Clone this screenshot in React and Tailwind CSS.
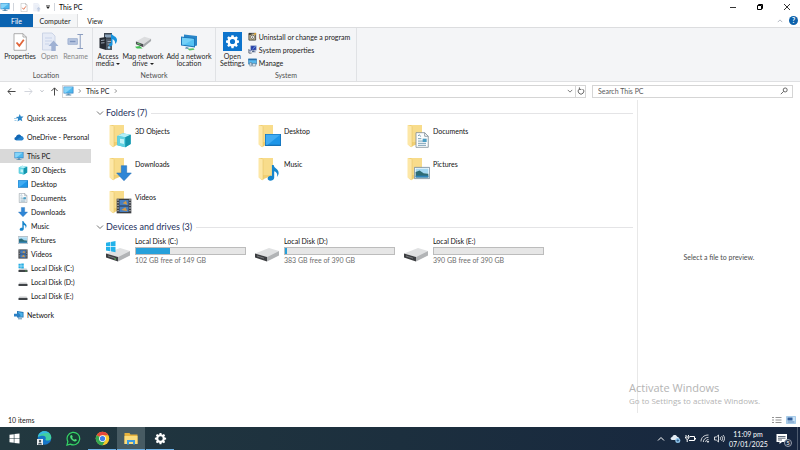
import { useState } from "react";

/* ---------- small icons ---------- */

const MonitorIcon = ({ className }) => (
	<svg className={className} viewBox="0 0 20 18">
		<rect x="1" y="1" width="18" height="12.5" fill="#2b7cc0" />
		<rect x="2.2" y="2.2" width="15.6" height="10" fill="#4fb8ee" />
		<path d="M2.2 2.2h15.6L5 12.200H2.200z" fill="#86d4f8" />
		<path d="M8 13.500h4v2h3v1.500H5v-1.500h3z" fill="#5f8fb0" />
	</svg>
);

const CheckPageIcon = ({ className }) => (
	<svg className={className} viewBox="0 0 14 18">
		<path d="M1 .7h9L13.300 4v13.300H1z" fill="#fff" stroke="#9a9a9a" strokeWidth=".8" />
		<path d="M10 .7V4h3.300" fill="none" stroke="#9a9a9a" strokeWidth=".8" />
		<path d="M3.500 9.500l2.800 3.200 4.500-6" fill="none" stroke="#e0653a" strokeWidth="1.800" />
	</svg>
);

const OpenIcon = ({ className }) => (
	<svg className={className} viewBox="0 0 18 20">
		<path d="M1.500 1h9.500l3 3v14H1.500z" fill="#e6ebf6" stroke="#c3cde2" strokeWidth=".8" />
		<path d="M4 6h7M4 9h7M4 12h4" stroke="#c8d3ea" />
		<path d="M12.500 8.500l5 5.500h-2.800v5h-4.400v-5H7.500z" fill="#9fb1d3" />
	</svg>
);

const RenameIcon = ({ className }) => (
	<svg className={className} viewBox="0 0 18 18">
		<path d="M1 6h10v6H1z" fill="#b9c7e0" stroke="#94a7cb" strokeWidth=".8" />
		<path d="M3 9h6" stroke="#7f95bf" strokeWidth="1.500" />
		<path d="M14 1.500v15M11 1.500h6M11 16.500h6" stroke="#8b9dc0" strokeWidth="1.100" fill="none" />
	</svg>
);

const MediaIcon = ({ className }) => (
	<svg className={className} viewBox="0 0 20 20">
		<path d="M6 1h8v15H6z" fill="#3c4652" />
		<path d="M7 2.500h6v3H7z" fill="#8ba3ba" />
		<path d="M1.500 6L8 5v13l-6.500-2z" fill="#252b33" />
		<path d="M8 7h6v11H8z" fill="#4d5966" />
		<path d="M3 8.500l3.500-.5M3 11l3.500-.3M9.500 9.500H13M9.500 12H13" stroke="#a8b6c4" strokeWidth=".9" />
		<circle cx="11" cy="15.500" r="1.200" fill="#9fd5f2" />
		<path d="M13 1c1 3 6 3 6 7 0 2-1 3-2 4 .5-3-1-4-2.500-5v5.500c0 2-3.500 2.500-3.500.5 0-1.500 1.200-2 2-2z" fill="#1792dc" />
	</svg>
);

const NetDriveIcon = ({ className }) => (
	<svg className={className} viewBox="0 0 20 18">
		<path d="M2 9l9-5 7 2-8 6z" fill="#dcdddf" />
		<path d="M2 9l8 3v3l-8-3z" fill="#4b4e52" />
		<path d="M10 12l8-6v2.500L10 15z" fill="#a5a8ab" />
		<path d="M1 14.500l5-.7 3 2.700H3z" fill="#41c153" />
		<path d="M3.300 10.800l3.500 1.300" stroke="#6fdd74" />
	</svg>
);

const NetPlaceIcon = ({ className }) => (
	<svg className={className} viewBox="0 0 18 18">
		<path d="M4 1.500l13 1.500v9.500l-2 .5L4 9z" fill="#2a86c8" />
		<path d="M1 3.500L15 5v9.500L1 12.500z" fill="#1f78bb" />
		<path d="M2 4.700l12 1.200v7.300L2 11.500z" fill="#55c2f3" />
		<path d="M2 4.700l12 1.200L4 11.800l-2-.3z" fill="#74d0f7" />
		<path d="M6 14l2.500.4v1.500L5 15.500z" fill="#5a90b2" />
		<path d="M7.500 15.800l6-.5 1 1.500-5 .8z" fill="#56c266" />
	</svg>
);

const GEAR =
	"M10.200 2h3.600l.5 2.700 1.800.8 2.300-1.600 2.500 2.500-1.600 2.300.8 1.800 2.700.5v3.600l-2.700.5-.8 1.800 1.600 2.300-2.500 2.500-2.300-1.600-1.800.8-.5 2.700h-3.600l-.5-2.700-1.800-.8-2.300 1.600-2.500-2.500 1.600-2.300-.8-1.800-2.700-.5V11l2.700-.5.8-1.800-1.600-2.300 2.500-2.500 2.300 1.600 1.800-.8zM12 8.200a4.300 4.300 0 1 0 0 8.600 4.300 4.300 0 0 0 0-8.600z";

const GearIcon = ({ className }) => (
	<svg className={className} viewBox="0 0 24 25" fill="currentColor">
		<path fillRule="evenodd" d={GEAR} />
	</svg>
);

const UninstallIcon = ({ className }) => (
	<svg className={className} viewBox="0 0 10 10">
		<path d="M1 1.500h7.500V9H1z" fill="#c7bb94" stroke="#3d3b36" strokeWidth=".9" />
		<path d="M1 1.500h3V3H1z" fill="#222" />
		<circle cx="5" cy="5.700" r="2.200" fill="#f7f7f2" stroke="#55524b" strokeWidth=".8" />
		<circle cx="5" cy="5.700" r=".6" fill="#444" />
		<path d="M7 1h2v2H7z" fill="#e2a734" />
	</svg>
);

const SystemIcon = ({ className }) => (
	<svg className={className} viewBox="0 0 10 10">
		<path d="M3 .8h6.200v5H3z" fill="#2438a8" stroke="#9fb0c8" strokeWidth=".6" />
		<path d="M5 4.500L8.500 1.300" stroke="#8ecaf5" strokeWidth=".9" />
		<path d="M5 6h2v1.200h1.500V8H4z" fill="#51668b" />
		<path d="M1 4.500v4.500h3" fill="none" stroke="#404a5c" strokeWidth=".9" />
		<path d="M1.500 6l1 1L4.300 4.600" fill="none" stroke="#203a90" strokeWidth=".8" />
	</svg>
);

const ManageIcon = ({ className }) => (
	<svg className={className} viewBox="0 0 10 10">
		<path d="M.5 1h9v5.800h-9z" fill="#57b9ee" stroke="#3479b0" strokeWidth=".7" />
		<path d="M.5 1h9v1.500h-9z" fill="#2c6ea8" />
		<path d="M2 5h2v4H2zM5 6h3.500v3H5z" fill="#d8e3ec" stroke="#47637c" strokeWidth=".5" />
	</svg>
);

const Chevron = ({ className, up }) => (
	<svg className={className} viewBox="0 0 8 8" fill="none" stroke="currentColor">
		<path d={up ? "M1 5.500l3-3 3 3" : "M1 2.500l3 3 3-3"} />
	</svg>
);

const Arrow = ({ className, d }) => (
	<svg className={className} viewBox="0 0 10 10" fill="none" stroke="currentColor" strokeWidth="1.100">
		<path d={d} />
	</svg>
);

const DiskGlyph = ({ className, windows }) => (
	<svg className={className} viewBox="0 0 10 10">
		<path d="M1.500 5.500h7l1 1.500h-9z" fill="#c9cbcd" />
		<path d="M.5 7h9v2h-9z" fill="#3f4347" />
		{windows && (
			<>
				<path d="M.5.800h2.300v2H.500zM3.200.500h2.600v2.300H3.200zM.500 3.200h2.300v2H.500zM3.200 3.200h2.600v2.300H3.200z" fill="#27aee4" />
				<path d="M7.500 7.500h1v1h-1z" fill="#5fdc60" />
			</>
		)}
	</svg>
);

/* glyphs shared by the tree and the folder tiles, 12x12 */
const CubeArt = () => (
	<>
		<path d="M1 3l4-2 6 1v7l-4 2.500L1 10z" fill="#2fb4cf" />
		<path d="M1 3l4-2 6 1-4 2z" fill="#b4eef5" />
		<path d="M1 3l6 1v7.500L1 10z" fill="#62d2e2" />
		<path d="M3 5l3 .5V9L3 8.300z" fill="#c2f3f7" />
		<path d="M7 4l4-2v7l-4 2.500z" fill="#1596ad" />
	</>
);
const DesktopArt = () => (
	<>
		<path d="M0 1.500h12v9H0z" fill="#1673b9" />
		<path d="M.6 2h10.800v7.500H.600z" fill="#1e96e8" />
		<path d="M.6 2h10.800L2 9.500H.600z" fill="#41acf2" />
	</>
);
const DocArt = () => (
	<>
		<path d="M1.500.500H8l2.700 2.700v8.300H1.500z" fill="#fbfdfe" stroke="#7e8b95" strokeWidth=".6" />
		<path d="M8 .5v2.700h2.700" fill="none" stroke="#7e8b95" strokeWidth=".6" />
		<path d="M3 3l1-1 1 1.500M3 5h2.500M3 6.800h6M3 8.500h6M3 10h6" fill="none" stroke="#5c8aa5" strokeWidth=".6" />
		<path d="M6.500 5h3v2.500h-3z" fill="#4b9ec4" />
	</>
);
const DownArt = () => (
	<path d="M4 .500h4v5.500h3.500L6 11.800.500 6H4z" fill="#2f86d6" stroke="#1d69b3" strokeWidth=".4" />
);
const MusicArt = () => (
	<path d="M5.200 0h1.300c.4 2.800 4 3 3.700 6.300-.1 1.100-.7 2-1.300 2.700.7-2.200 0-3.700-2-4.300v4.800C6.900 12 2 12.700 2 10.200c0-1.900 2-2.400 3.200-2z" fill="#1785cc" />
);
const PictureArt = () => (
	<>
		<path d="M.3 1.800h11.400v8.400H.300z" fill="#fff" stroke="#6f8798" strokeWidth=".6" />
		<path d="M1.200 2.700h9.600v3.800H1.200z" fill="#a5d8f2" />
		<path d="M1.200 5.200l3-1 3 2 3.600.3v2.800H1.200z" fill="#2e6c76" />
		<path d="M1.200 8h9.600v1.300H1.200z" fill="#2d83bb" />
	</>
);
const VideoArt = () => (
	<>
		<path d="M.5.500h11v11H.500z" fill="#3a3d42" />
		<path d="M2.600 1.500h6.800v9H2.600z" fill="#477fc1" />
		<path d="M5 4l2.500-2 1 3zM4 9l3-2 1.500 3z" fill="#d49a45" />
		<path d="M2.600 6h6.800" stroke="#2c3038" strokeWidth=".7" />
		<path d="M1.500 1v10M10.500 1v10" stroke="#d8dade" strokeWidth=".8" strokeDasharray="1 1" />
	</>
);

const artwork = {
	cube: CubeArt,
	desktop: DesktopArt,
	doc: DocArt,
	down: DownArt,
	music: MusicArt,
	picture: PictureArt,
	video: VideoArt,
};

const SmallArt = ({ name }) => {
	const Art = artwork[name];
	return (
		<svg className="w-[10px] h-[10px] shrink-0" viewBox="0 0 12 12">
			<Art />
		</svg>
	);
};

const FolderIcon = ({ name }) => {
	const Art = artwork[name];
	return (
		<svg className="w-6 h-6 shrink-0" viewBox="0 0 24 24">
			<path d="M2 1h13v17.500L4.500 23 2 20.500z" fill="#f1cf73" />
			<path d="M5.500 1H16v17H5.500z" fill="#f8dc8b" />
			<path d="M1.500 1l4.500 1.500V23.500l-4.500-3z" fill="#fde7a6" />
			<path d="M6 2.500v20.500" stroke="#e3bd5e" strokeWidth=".5" />
			<svg x="8" y="8" width="16" height="16" viewBox="0 0 12 12">
				<Art />
			</svg>
		</svg>
	);
};

const DriveIcon = ({ windows }) => (
	<svg className="w-[26px] h-6 shrink-0" viewBox="0 0 26 24">
		<path d="M1 14.500L15 9l10 3-12 6z" fill="#e0e1e2" />
		<path d="M1 14.500L13 18v4.500L1 18.500z" fill="#3c3e41" />
		<path d="M13 18l12-6v4.500l-12 6z" fill="#b2b4b6" />
		<path d="M3 17l7 2.200" stroke="#77797c" />
		{windows && (
			<>
				<path d="M1 3.700l4-.7v4.300H1zM5.600 2.900L10.500 2v5.300H5.600zM1 7.900h4v4.300l-4-.7zM5.600 7.900h4.900v5.300l-4.900-.9z" fill="#22b2ea" />
				<path d="M9.500 19.500h1.500v1h-1.500z" fill="#63d65f" />
			</>
		)}
	</svg>
);

/* ---------- data ---------- */

const tree = [
	{ label: "3D Objects", art: "cube" },
	{ label: "Desktop", art: "desktop" },
	{ label: "Documents", art: "doc" },
	{ label: "Downloads", art: "down" },
	{ label: "Music", art: "music" },
	{ label: "Pictures", art: "picture" },
	{ label: "Videos", art: "video" },
	{ label: "Local Disk (C:)", disk: true, windows: true },
	{ label: "Local Disk (D:)", disk: true },
	{ label: "Local Disk (E:)", disk: true },
];

const folders = tree.filter((item) => !item.disk);

const drives = [
	{ label: "Local Disk (C:)", free: 102, total: 149, windows: true },
	{ label: "Local Disk (D:)", free: 383, total: 390 },
	{ label: "Local Disk (E:)", free: 390, total: 390 },
];

/* ---------- window parts ---------- */

const TitleBar = () => (
	<header className="h-[14px] flex items-center bg-white">
		<MonitorIcon className="w-[10px] h-[10px]" />
		<span className="w-px h-2 ml-[3px] bg-gray-300" />
		<CheckPageIcon className="w-2 h-[9px] ml-1.5" />
		<OpenIcon className="w-2 h-[9px] ml-[5px] opacity-60" />
		<svg className="w-1.5 h-1.5 ml-1" viewBox="0 0 6 6">
			<path d="M1 1h4v.600H1zM1 2.500h4L3 5z" fill="#222" />
		</svg>
		<span className="w-px h-2 ml-[3px] bg-gray-300" />
		<h1 className="ml-1 text-[7px] text-black">This PC</h1>
		<div className="ml-auto flex items-center text-black">
			<button aria-label="Minimize" className="w-[27px] h-[14px] flex justify-center items-center">
				<svg className="w-2 h-2" viewBox="0 0 8 8">
					<path d="M1 4.500h6" stroke="currentColor" strokeWidth=".8" />
				</svg>
			</button>
			<button aria-label="Restore" className="w-[27px] h-[14px] flex justify-center items-center">
				<svg className="w-2 h-2" viewBox="0 0 8 8" fill="none" stroke="currentColor">
					<path d="M1.500 2.500h4v4h-4zM2.500 2.500v-1h4v4h-1" />
				</svg>
			</button>
			<button aria-label="Close" className="w-[27px] h-[14px] flex justify-center items-center">
				<svg className="w-2 h-2" viewBox="0 0 8 8">
					<path d="M1 1l6 6M7 1L1 7" stroke="currentColor" strokeWidth=".8" />
				</svg>
			</button>
		</div>
	</header>
);

const TabRow = () => (
	<div className="h-[14px] flex items-stretch border-b border-[#dcdddf] text-[7px]">
		<button className="w-[33px] bg-[#0b63b0] text-white">File</button>
		<button className="w-[45px] bg-[#f5f6f7] border-r border-[#dcdddf] text-[#222]">Computer</button>
		<button className="w-[34px] text-[#222]">View</button>
		<div className="ml-auto flex items-center gap-1.5 pr-0.5">
			<button aria-label="Collapse ribbon" className="text-gray-400">
				<Chevron up className="w-1.5 h-1.5" />
			</button>
			<button
				aria-label="Help"
				className="w-[9px] h-[9px] flex justify-center items-center rounded-full bg-[#0c62ac] text-white text-[7px] leading-none font-bold"
			>
				?
			</button>
		</div>
	</div>
);

const RibbonButton = ({ icon, lines, width, disabled, menu }) => (
	<button disabled={disabled} className={`${width} flex flex-col items-center leading-[7px] ${disabled ? "text-[#858585]" : "text-[#1f1f1f]"}`}>
		<span className="h-[21px] mb-px flex items-center">{icon}</span>
		{lines.map((line, i) => (
			<span key={line} className="flex items-center whitespace-nowrap">
				{line}
				{menu && i === lines.length - 1 && (
					<svg className="w-1 h-1 ml-0.5" viewBox="0 0 4 4">
						<path d="M0 1h4L2 3z" fill="currentColor" />
					</svg>
				)}
			</span>
		))}
	</button>
);

const RibbonGroup = ({ label, className, children }) => (
	<section aria-label={label} className={`flex flex-col justify-between border-r border-[#e0e2e5] pt-[3px] pb-px ${className}`}>
		<div className="flex justify-center">{children}</div>
		<p className="text-center leading-[9px] text-[#4f4f4f]">{label}</p>
	</section>
);

const Ribbon = () => (
	<div className="h-[54px] flex bg-[#f4f5f7] border-b border-[#dfe0e2] text-[7px]">
		<RibbonGroup label="Location" className="w-[93px]">
			<RibbonButton width="w-[36px]" lines={["Properties"]} icon={<CheckPageIcon className="w-[14px] h-[18px]" />} />
			<RibbonButton width="w-[23px]" disabled lines={["Open"]} icon={<OpenIcon className="w-[18px] h-5" />} />
			<RibbonButton width="w-[29px]" disabled lines={["Rename"]} icon={<RenameIcon className="w-[17px] h-[17px]" />} />
		</RibbonGroup>
		<RibbonGroup label="Network" className="w-[123px]">
			<RibbonButton width="w-[25px]" menu lines={["Access", "media"]} icon={<MediaIcon className="w-5 h-5" />} />
			<RibbonButton width="w-[45px]" menu lines={["Map network", "drive"]} icon={<NetDriveIcon className="w-[19px] h-[17px]" />} />
			<RibbonButton width="w-[47px]" lines={["Add a network", "location"]} icon={<NetPlaceIcon className="w-[18px] h-[18px]" />} />
		</RibbonGroup>
		<RibbonGroup label="System" className="w-[141px]">
			<RibbonButton
				width="w-[29px]"
				lines={["Open", "Settings"]}
				icon={
					<span className="w-[19px] h-[19px] flex justify-center items-center bg-[#0d74cd] text-white">
						<GearIcon className="w-[15px] h-[15px]" />
					</span>
				}
			/>
			<div className="pl-px pr-1 flex flex-col gap-0.5 text-[#1a1a1a]">
				<button className="h-[11px] flex items-center gap-0.5 whitespace-nowrap">
					<UninstallIcon className="w-[9px] h-[9px]" />
					Uninstall or change a program
				</button>
				<button className="h-[11px] flex items-center gap-0.5 whitespace-nowrap">
					<SystemIcon className="w-[9px] h-[9px]" />
					System properties
				</button>
				<button className="h-[11px] flex items-center gap-0.5 whitespace-nowrap">
					<ManageIcon className="w-[9px] h-[9px]" />
					Manage
				</button>
			</div>
		</RibbonGroup>
	</div>
);

const AddressRow = () => {
	const [query, setQuery] = useState("");

	return (
		<div className="h-[18px] flex items-center pl-[6px] pr-[7px] bg-white text-[7px] text-[#222]">
			<button aria-label="Back" className="w-[11px] flex justify-center text-[#444]">
				<Arrow className="w-[9px] h-[9px]" d="M9.500 5H1M4.500 1.500L1 5l3.500 3.500" />
			</button>
			<button aria-label="Forward" className="w-[11px] ml-1.5 flex justify-center text-gray-300">
				<Arrow className="w-[9px] h-[9px]" d="M.5 5H9M5.500 1.500L9 5 5.500 8.500" />
			</button>
			<button aria-label="Recent locations" className="w-2 ml-1 flex justify-center text-gray-500">
				<Chevron className="w-1 h-1" />
			</button>
			<button aria-label="Up" className="w-[10px] ml-[3px] flex justify-center text-[#444]">
				<Arrow className="w-[9px] h-[9px]" d="M5 9.500V1M1.500 4.500L5 1l3.500 3.500" />
			</button>
			<nav aria-label="Address" className="h-[13px] flex-1 ml-[3px] flex items-center border border-[#d5d5d5]">
				<MonitorIcon className="w-[11px] h-[10px]" />
				<Arrow className="w-1.5 h-1.5 ml-[3px] text-[#555]" d="M3 2l3 3-3 3" />
				<button className="ml-[3px]">This PC</button>
				<Arrow className="w-1.5 h-1.5 ml-1 text-[#555]" d="M3 2l3 3-3 3" />
				<button aria-label="Previous locations" className="ml-auto mr-0.5 text-[#555]">
					<Chevron className="w-1.5 h-1.5" />
				</button>
				<button aria-label="Refresh" className="w-[10px] h-full flex justify-center items-center border-l border-[#d5d5d5] text-[#555]">
					<Arrow className="w-2 h-2" d="M3 2.500a3.500 3.500 0 1 0 4 0M3 .500v2.500h2.500" />
				</button>
			</nav>
			<label className="w-[201px] h-[13px] ml-1.5 pl-[5px] pr-1 flex items-center border border-[#d5d5d5]">
				<input
					type="text"
					aria-label="Search This PC"
					placeholder="Search This PC"
					className="min-w-0 flex-1 h-full text-[7px] placeholder-[#5a5a5a] focus:outline-none"
					value={query}
					onChange={(e) => setQuery(e.target.value)}
				/>
				<Arrow className="w-2 h-2 text-[#555]" d="M1 9l3.500-3.500M4 3.700a2.500 2.500 0 1 0 5 0 2.500 2.500 0 0 0-5 0" />
			</label>
		</div>
	);
};

const TreeRow = ({ icon, label, nested, selected }) => (
	<a
		href="#"
		className={`h-[14px] mr-[5px] flex items-center gap-[3px] whitespace-nowrap ${nested ? "pl-[18px]" : "pl-[14px]"} ${selected ? "bg-[#d9d9d9]" : ""}`}
	>
		{icon}
		{label}
	</a>
);

const Sidebar = () => (
	<nav aria-label="Folders" className="w-24 shrink-0 pt-[11px] flex flex-col gap-[5px] text-[7px] text-[#111]">
		<TreeRow
			label="Quick access"
			icon={
				<svg className="w-[10px] h-[10px] shrink-0" viewBox="0 0 10 10">
					<path d="M5.800 1l1 2.400 2.700.1-1.900 2 .7 2.700-2.300-1.300L3.500 8.500l.6-2.700-2.300-1.700 2.800-.3z" fill="#2b86c8" />
					<path d="M0 5.500h3M.5 7.500h2" stroke="#7ab7e0" strokeWidth=".7" />
				</svg>
			}
		/>
		<TreeRow
			label="OneDrive - Personal"
			icon={
				<svg className="w-[10px] h-[10px] shrink-0" viewBox="0 0 10 10">
					<path d="M2 8.300C-.3 8 .1 5.200 2 5c.3-3 4.300-3.600 5.400-.8C9.500 4.200 10.500 7.800 8 8.300z" fill="#1267b4" />
					<path d="M2 8.300l5.400-4.100C9.500 4.200 10.500 7.800 8 8.300z" fill="#2383cf" />
				</svg>
			}
		/>
		<div>
			<TreeRow label="This PC" selected icon={<MonitorIcon className="w-[10px] h-[10px]" />} />
			{tree.map((item) => (
				<TreeRow
					key={item.label}
					nested
					label={item.label}
					icon={item.disk ? <DiskGlyph className="w-[10px] h-[10px]" windows={item.windows} /> : <SmallArt name={item.art} />}
				/>
			))}
		</div>
		<TreeRow
			label="Network"
			icon={
				<svg className="w-[10px] h-[10px] shrink-0" viewBox="0 0 10 10">
					<path d="M3 1l6.500 1v5.500L3 7.500z" fill="#1d6fb0" />
					<path d="M3.800 2l4.900.7v4l-4.900-.1z" fill="#4db3ea" />
					<path d="M0 3.800h4V2.500l2.800 2.800L4 8V6.500H0z" fill="#2b80c4" />
					<path d="M4 8.300h4v1H4z" fill="#5f8eb0" />
				</svg>
			}
		/>
	</nav>
);

const Section = ({ title, children }) => {
	const [open, setOpen] = useState(true);

	return (
		<section>
			<h2 className="h-3 flex items-center">
				<button className="flex items-center gap-0.5 text-[9px] leading-3 text-[#1e2f5c]" aria-expanded={open} onClick={() => setOpen(!open)}>
					<Chevron className="w-2 h-2 text-[#777]" />
					{title}
				</button>
				<span className="flex-1 h-px ml-1 bg-[#e4e4e6]" />
			</h2>
			{open && children}
		</section>
	);
};

const Content = () => (
	<main className="flex-1 pt-[7px] pr-1 text-[7px] text-[#111]">
		<Section title="Folders (7)">
			<div className="pl-3 pt-[5px] pb-[7px] grid grid-cols-[repeat(auto-fill,149px)] gap-y-[9px]">
				{folders.map((f) => (
					<button key={f.label} className="flex items-start gap-[3px] text-left">
						<FolderIcon name={f.art} />
						<span className="pt-0.5 leading-[10px]">{f.label}</span>
					</button>
				))}
			</div>
		</Section>
		<Section title="Devices and drives (3)">
			<div className="pl-[9px] pt-[3px] grid grid-cols-[repeat(auto-fill,149px)]">
				{drives.map((d) => (
					<button key={d.label} className="flex items-center gap-1 text-left">
						<DriveIcon windows={d.windows} />
						<span className="w-[111px] flex flex-col">
							<span className="leading-[11px]">{d.label}</span>
							<span className="h-2 flex border border-[#bcbcbc] bg-[#e6e6e6]">
								<span className="bg-[#26a0da]" style={{ width: `${((d.total - d.free) / d.total) * 100}%` }} />
							</span>
							<span className="leading-[11px] text-[#6d6d6d]">
								{d.free} GB free of {d.total} GB
							</span>
						</span>
					</button>
				))}
			</div>
		</Section>
	</main>
);

const StatusBar = () => (
	<footer className="h-[14px] pl-2 pr-1 flex items-center text-[7px] text-[#222]">
		10 items
		<div className="ml-auto flex gap-1">
			<button aria-label="Details view">
				<svg className="w-[10px] h-2" viewBox="0 0 10 8">
					<path d="M0 1.500h2M3.500 1.500h6M0 4h2M3.500 4h6M0 6.500h2M3.500 6.500h6" stroke="#777" strokeWidth=".8" />
				</svg>
			</button>
			<button aria-label="Large icons view">
				<svg className="w-[10px] h-2" viewBox="0 0 10 8">
					<path d="M.5.500h9v7h-9z" fill="#c7e2f7" stroke="#7eb4de" strokeWidth=".6" />
					<path d="M1.500 1.500h5v3h-5z" fill="#315f9c" />
					<path d="M1.500 6h7" stroke="#315f9c" strokeWidth=".7" />
				</svg>
			</button>
		</div>
	</footer>
);

/* ---------- taskbar ---------- */

const TaskButton = ({ label, running, active, children }) => (
	<button
		aria-label={label}
		className={`w-[28px] h-full flex justify-center items-center border-b ${running ? "border-[#6fb2e8]" : "border-transparent"} ${active ? "bg-[#475b63]" : ""}`}
	>
		{children}
	</button>
);

const Taskbar = () => (
	<div className="h-[23px] flex items-center bg-linear-to-r from-[#22383f] via-[#1c2f3e] to-[#16253f] text-white">
		<TaskButton label="Start">
			<svg className="w-[11px] h-[11px]" viewBox="0 0 11 11" fill="#fff">
				<path d="M.5 1.800L4.800 1.200v4H.500zM5.400 1.100l5.100-.7v4.800H5.400zM.500 5.800h4.300v4L.500 9.200zM5.400 5.800h5.100v4.800l-5.100-.7z" />
			</svg>
		</TaskButton>
		<div className="h-full flex items-center ml-0.5 gap-px">
			<TaskButton label="Microsoft Edge">
				<svg className="w-4 h-4" viewBox="0 0 16 16">
					<circle cx="8.500" cy="8" r="6.800" fill="#1676c8" />
					<path d="M1.800 7C2.500 3 5.500 1.200 8.500 1.200c4 0 7 3 6.800 6.500-.3 3-4.500 3.600-6 2 1.200-1.200.5-3.700-2-3.900C4.800 5.700 2.900 6.500 1.800 7z" fill="#41cfa0" />
					<path d="M1.800 7C2.500 3 5.500 1.200 8.500 1.200c2 0 3.500.6 4.800 2C9 2.500 4 4 1.800 7z" fill="#35b9e4" />
					<path d="M1 9h6v6H1z" fill="#e9edf0" />
					<circle cx="4" cy="11" r="1.200" fill="#47535b" />
					<path d="M2 14.500c0-2.500 4-2.500 4 0z" fill="#47535b" />
				</svg>
			</TaskButton>
			<TaskButton label="WhatsApp">
				<svg className="w-[15px] h-[15px]" viewBox="0 0 16 16">
					<path d="M1 15l1-3.700A6.700 6.700 0 1 1 4.700 14z" fill="#173e35" stroke="#35d366" strokeWidth="1.300" />
					<path d="M5.300 4.500l1-.2.900 2-.7.900c.5 1 1.300 1.700 2.300 2.200l.9-.9 1.900.9c0 1.600-1.400 2-2.500 1.700-2.300-.6-4-2.300-4.600-4.400-.2-.9.200-1.800.8-2.200z" fill="#4ddf79" />
				</svg>
			</TaskButton>
			<TaskButton label="Google Chrome" running>
				<svg className="w-[15px] h-[15px]" viewBox="0 0 16 16">
					<circle cx="8" cy="8" r="7.200" fill="#f7c92d" />
					<path d="M8 8L1.760 4.400A7.200 7.200 0 0 1 14.240 4.400H8z" fill="#e5473a" />
					<path d="M1.760 4.400A7.200 7.200 0 0 0 8 15.200L11.100 9.800 8 8z" fill="#34a853" />
					<circle cx="8" cy="8" r="3.600" fill="#fff" />
					<circle cx="8" cy="8" r="2.800" fill="#3f7ee8" />
				</svg>
			</TaskButton>
			<TaskButton label="File Explorer" running active>
				<svg className="w-[14px] h-[13px]" viewBox="0 0 14 13">
					<path d="M.5 1h5l1 1.500h7V12H.500z" fill="#e8b23c" />
					<path d="M.5 4h13v8H.500z" fill="#fbdc7d" />
					<path d="M3 8h8v4.500H9V10H5v2.500H3z" fill="#3c9be0" />
				</svg>
			</TaskButton>
			<TaskButton label="Settings" running>
				<GearIcon className="w-[13px] h-[13px]" />
			</TaskButton>
		</div>

		<div className="ml-auto flex items-center text-[7px]">
			<button aria-label="Show hidden icons">
				<Chevron up className="w-2 h-2" />
			</button>
			<svg className="w-[11px] h-[11px] ml-[5px]" viewBox="0 0 11 11">
				<path d="M2 7C-.2 6.500.5 4 2.300 4c.5-2.500 4.200-2.500 4.800-.3C9.500 3.700 9.800 7 8 7z" fill="#e4edf4" />
				<circle cx="7.800" cy="7.500" r="2.500" fill="#8fc4ea" />
				<path d="M6.500 7.500h2.600M7.800 6.200v2.600" stroke="#23507d" strokeWidth=".7" />
			</svg>
			<svg className="w-[11px] h-[9px] ml-1" viewBox="0 0 11 9" fill="none" stroke="#fff">
				<path d="M4.500 2.500H9.500v4H4M10.500 4v1.500" />
				<path d="M1 1v1.500M3.500 1v1.500M.500 3h3.500c0 3-3.500 3-3.500 0M2.200 5.500V8" />
			</svg>
			<svg className="w-[10px] h-[9px] ml-1" viewBox="0 0 10 9" fill="none" stroke="#fff" strokeWidth=".8">
				<path d="M1 7.500C1 3.500 4 1 8.500 1M3.300 8C3.300 5.500 5.500 3.300 8.500 3.300M5.700 8c0-1.500 1.200-2.500 2.800-2.500" />
				<circle cx="8" cy="7.700" r=".6" fill="#fff" />
			</svg>
			<svg className="w-[11px] h-[9px] ml-1" viewBox="0 0 11 9" fill="none" stroke="#fff" strokeWidth=".8">
				<path d="M.5 3h1.800L4.500 1v7L2.300 6H.500zM6 3c.8.8.8 2.200 0 3M7.500 2c1.400 1.400 1.400 3.600 0 5M9 1c2 2 2 5 0 7" />
			</svg>
			<time className="w-[38px] ml-1 text-center leading-[10px]">
				<span className="block">11:09 pm</span>
				<span className="block">07/01/2025</span>
			</time>
			<button aria-label="Notifications" className="relative ml-[9px] mr-[9px]">
				<svg className="w-3 h-3" viewBox="0 0 12 12">
					<path d="M.5 1h10.500v8H6L3.500 11V9h-3z" fill="#fff" />
					<path d="M2 3.500h7.500M2 5.200h7.500M2 7h4" stroke="#1a2940" strokeWidth=".7" />
				</svg>
				<span className="absolute -right-1 -bottom-0.5 w-2 h-2 rounded-full border border-gray-400 bg-[#1b2940] text-[6px] leading-[6px] text-center">5</span>
			</button>
			<span className="w-px h-[23px] mr-0.5 bg-[#4d5a6e]" />
		</div>
	</div>
);

export default function App() {
	return (
		<div className="relative min-h-screen flex flex-col bg-white font-['Lato','Open_Sans',sans-serif] leading-[10px]">
			<TitleBar />
			<TabRow />
			<Ribbon />
			<AddressRow />
			<div className="flex-1 flex">
				<Sidebar />
				<Content />
				<aside className="w-[163px] flex justify-center items-center border-l border-[#e8e8e8] text-[7px] text-[#4c4c4c]">
					Select a file to preview.
				</aside>
			</div>
			<StatusBar />
			<Taskbar />

			{/* Activation watermark sits over the window */}
			<div className="absolute right-8 bottom-11 w-[139px] pointer-events-none font-['Open_Sans',sans-serif] text-[#b4b4b4]">
				<p className="text-[11px] leading-[14px]">Activate Windows</p>
				<p className="text-[8px] leading-[11px]">Go to Settings to activate Windows.</p>
			</div>
		</div>
	);
}
